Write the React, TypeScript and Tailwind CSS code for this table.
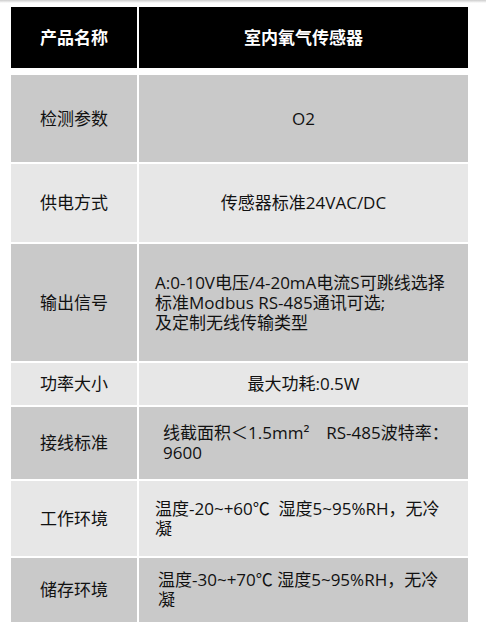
import React from "react";

type Row = {
  label: string;
  h: string;
  bg: string;
  lines: string[];
  align: "center" | "left";
  pl?: string;
};

const rows: Row[] = [
  { label: "检测参数", h: "h-[87px]", bg: "bg-[#c9c9c9]", lines: ["O2"], align: "center" },
  { label: "供电方式", h: "h-[78px]", bg: "bg-[#e7e7e7]", lines: ["传感器标准24VAC/DC"], align: "center" },
  {
    label: "输出信号",
    h: "h-[117px]",
    bg: "bg-[#c9c9c9]",
    lines: ["A:0-10V电压/4-20mA电流S可跳线选择", "标准Modbus RS-485通讯可选;", "及定制无线传输类型"],
    align: "left",
    pl: "pl-[16px]",
  },
  { label: "功率大小", h: "h-[42px]", bg: "bg-[#e7e7e7]", lines: ["最大功耗:0.5W"], align: "center" },
  {
    label: "接线标准",
    h: "h-[72px]",
    bg: "bg-[#c9c9c9]",
    lines: ["线截面积＜1.5mm²\u3000RS-485波特率：", "9600"],
    align: "left",
    pl: "pl-[24px]",
  },
  {
    label: "工作环境",
    h: "h-[75px]",
    bg: "bg-[#e7e7e7]",
    lines: ["温度-20~+60℃\u00a0\u00a0湿度5~95%RH，无冷", "凝"],
    align: "left",
    pl: "pl-[16px]",
  },
  {
    label: "储存环境",
    h: "h-[64px]",
    bg: "bg-[#c9c9c9]",
    lines: ["温度-30~+70℃ 湿度5~95%RH，无冷", "凝"],
    align: "left",
    pl: "pl-[19px]",
  },
];

export default function App() {
  return (
    <div className="w-[486px] h-[627px] bg-white overflow-hidden font-['Open_Sans','Noto_Sans_CJK_SC',sans-serif] text-[17px] text-[#111]">
      <div className="h-[3px] bg-gradient-to-b from-[#cdcdcd] to-white" />
      <div className="pl-[11px] pt-[4px] w-[468px] flex flex-col">
        <div className="grid grid-cols-[126px_329px] gap-x-[2px] h-[61px]">
          <div className="bg-black text-white font-bold flex items-center justify-center leading-[20px]">
            产品名称
          </div>
          <div className="bg-black text-white font-bold flex items-center justify-center leading-[20px]">
            室内氧气传感器
          </div>
        </div>
        <div className="flex flex-col gap-y-[2px] mt-[7px]">
          {rows.map((r) => (
            <div key={r.label} className={`grid grid-cols-[126px_329px] gap-x-[2px] ${r.h}`}>
              <div className={`${r.bg} flex items-center justify-center leading-[20px]`}>{r.label}</div>
              {r.align === "center" ? (
                <div className={`${r.bg} flex items-center justify-center leading-[20px]`}>{r.lines[0]}</div>
              ) : (
                <div className={`${r.bg} flex flex-col justify-center leading-[20px] ${r.pl ?? ""}`}>
                  {r.lines.map((l, i) => (
                    <span key={i} className="whitespace-pre">
                      {l}
                    </span>
                  ))}
                </div>
              )}
            </div>
          ))}
        </div>
      </div>
    </div>
  );
}
